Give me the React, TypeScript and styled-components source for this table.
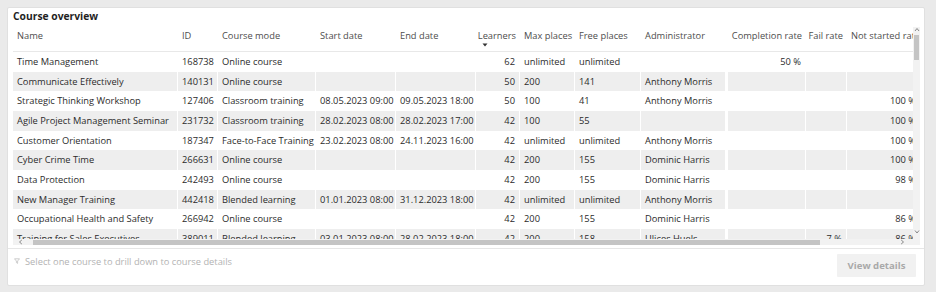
import React from "react";
import styled, { createGlobalStyle } from "styled-components";

const GlobalStyle = createGlobalStyle`
  html, body { margin: 0; padding: 0; background: #eaeaea; }
  body { font-family: "Segoe UI", "Open Sans", "Noto Sans", sans-serif; }
  * { box-sizing: border-box; }
`;

type Align = "left" | "right";
interface Col { title: string; width: number; align: Align; headAlign?: Align; sort?: boolean; sep?: number }

const COLS: Col[] = [
  { title: "Name", width: 165, align: "left" },
  { title: "ID", width: 40, align: "left" },
  { title: "Course mode", width: 98, align: "left" },
  { title: "Start date", width: 80, align: "left" },
  { title: "End date", width: 80, align: "left" },
  { title: "Learners", width: 44, align: "right", sort: true },
  { title: "Max places", width: 55, align: "left" },
  { title: "Free places", width: 66, align: "left" },
  { title: "Administrator", width: 87, align: "left", sep: 3 },
  { title: "Completion rate", width: 78, align: "right" },
  { title: "Fail rate", width: 41, align: "right" },
  { title: "Not started rate", width: 74, align: "right", headAlign: "left" },
];

const ROWS: string[][] = [
  ["Time Management", "168738", "Online course", "", "", "62", "unlimited", "unlimited", "", "50 %", "", ""],
  ["Communicate Effectively", "140131", "Online course", "", "", "50", "200", "141", "Anthony Morris", "", "", ""],
  ["Strategic Thinking Workshop", "127406", "Classroom training", "08.05.2023 09:00", "09.05.2023 18:00", "50", "100", "41", "Anthony Morris", "", "", "100 %"],
  ["Agile Project Management Seminar", "231732", "Classroom training", "28.02.2023 08:00", "28.02.2023 17:00", "42", "100", "55", "", "", "", "100 %"],
  ["Customer Orientation", "187347", "Face-to-Face Training", "23.02.2023 08:00", "24.11.2023 16:00", "42", "unlimited", "unlimited", "Anthony Morris", "", "", "100 %"],
  ["Cyber Crime Time", "266631", "Online course", "", "", "42", "200", "155", "Dominic Harris", "", "", "100 %"],
  ["Data Protection", "242493", "Online course", "", "", "42", "200", "155", "Dominic Harris", "", "", "98 %"],
  ["New Manager Training", "442418", "Blended learning", "01.01.2023 08:00", "31.12.2023 18:00", "42", "unlimited", "unlimited", "Anthony Morris", "", "", ""],
  ["Occupational Health and Safety", "266942", "Online course", "", "", "42", "200", "155", "Dominic Harris", "", "", "86 %"],
  ["Training for Sales Executives", "389011", "Blended learning", "03.01.2023 08:00", "28.02.2023 18:00", "42", "200", "158", "Ulices Huels", "", "7 %", "86 %"],
];

const gridTemplate = COLS.map((c) => `${c.width}px`).join(" ");

const Page = styled.div`
  padding: 7px 11px 6px 7px;
`;

const Card = styled.div`
  width: 918px;
  height: 279px;
  background: #ffffff;
  border: 1px solid #e0e0e0;
  border-radius: 2px;
  display: flex;
  flex-direction: column;
`;

const Title = styled.div`
  padding: 0 5px;
  height: 19px;
  line-height: 16px;
  font-size: 10.3px;
  font-weight: 700;
  color: #1f1f1f;
  white-space: nowrap;
`;

const TableFrame = styled.div`
  margin-left: 5px;
  display: grid;
  grid-template-columns: 900px 7px;
  grid-template-rows: 212px 6px;
`;

const Viewport = styled.div`
  overflow: hidden;
  position: relative;
`;

const RowGrid = styled.div<{ $stripe?: boolean; $head?: boolean }>`
  display: grid;
  grid-template-columns: ${gridTemplate};
  width: ${COLS.reduce((a, c) => a + c.width, 0)}px;
  height: ${(p) => (p.$head ? "25px" : "19.67px")};
  background: ${(p) => (p.$stripe ? "#eeeeee" : "#ffffff")};
  border-bottom: ${(p) => (p.$head ? "1px solid #e8e8e8" : "none")};
  color: ${(p) => (p.$head ? "#4d4d4d" : "#2b2b2b")};
  font-size: 9.3px;
`;

const Cell = styled.div<{ $align: Align; $sep?: number }>`
  padding: 0 4px;
  text-align: ${(p) => p.$align};
  white-space: nowrap;
  overflow: hidden;
  line-height: 19.67px;
  border-right: ${(p) => p.$sep ?? 1}px solid #ffffff;
`;

const HeadCell = styled.div<{ $align: Align }>`
  padding: 2px 4px 0 4px;
  text-align: ${(p) => p.$align};
  white-space: nowrap;
  overflow: hidden;
  line-height: 14px;
  display: flex;
  flex-direction: column;
  align-items: ${(p) => (p.$align === "right" ? "flex-end" : "flex-start")};
`;

const SortMark = styled.svg`
  display: block;
  align-self: flex-start;
  margin-left: 2px;
`;

const VTrack = styled.div`
  grid-row: 1 / span 2;
  grid-column: 2;
  background: #f2f2f2;
  display: flex;
  flex-direction: column;
  align-items: center;
`;

const VThumb = styled.div`
  width: 5px;
  height: 25px;
  margin-top: 2px;
  background: #c4c4c4;
`;

const Spacer = styled.div<{ $size?: number }>`
  flex: ${(p) => (p.$size ? `0 0 ${p.$size}px` : "1")};
`;

const HTrack = styled.div`
  grid-row: 2;
  grid-column: 1;
  background: #f2f2f2;
  display: flex;
  align-items: center;
  padding: 0 8px 0 5px;
`;

const HThumb = styled.div`
  width: 787px;
  height: 5px;
  margin-left: 9px;
  background: #c4c4c4;
`;

const Arrow = styled.svg`
  display: block;
  flex: none;
`;

const Footer = styled.div`
  margin-top: 3px;
  border-top: 1px solid #e6e6e6;
  display: flex;
  align-items: flex-start;
  justify-content: space-between;
  padding: 5px 8px 0 6px;
  flex: 1;
`;

const Hint = styled.div`
  display: flex;
  align-items: center;
  gap: 5px;
  height: 14px;
  font-size: 9.3px;
  color: #b3b3b3;
  white-space: nowrap;
`;

const Button = styled.button`
  width: 79px;
  height: 23px;
  border: none;
  border-radius: 1px;
  background: #f1f1f1;
  color: #a9a9a9;
  font-family: inherit;
  font-size: 9.6px;
  font-weight: 700;
  padding: 0;
  cursor: default;
`;

const Chevron = ({ dir }: { dir: "up" | "down" | "left" | "right" }) => {
  const d = {
    up: "M1 4 L3 1.5 L5 4",
    down: "M1 1.5 L3 4 L5 1.5",
    left: "M3.8 1 L1.5 3 L3.8 5",
    right: "M2.2 1 L4.5 3 L2.2 5",
  }[dir];
  return (
    <Arrow width="6" height="6" viewBox="0 0 6 6">
      <path d={d} fill="none" stroke="#7a7a7a" strokeWidth="0.9" />
    </Arrow>
  );
};

export default function App() {
  return (
    <>
      <GlobalStyle />
      <Page>
        <Card>
          <Title>Course overview</Title>
          <TableFrame>
            <Viewport>
              <RowGrid $head>
                {COLS.map((c) => (
                  <HeadCell key={c.title} $align={c.headAlign ?? c.align}>
                    <span>{c.title}</span>
                    {c.sort && (
                      <SortMark width="6" height="4" viewBox="0 0 6 4">
                        <path d="M0.5 0.5 H5.5 L3 3.5 Z" fill="#333" />
                      </SortMark>
                    )}
                  </HeadCell>
                ))}
              </RowGrid>
              {ROWS.map((r, i) => (
                <RowGrid key={i} $stripe={i % 2 === 1}>
                  {r.map((v, j) => (
                    <Cell key={j} $align={COLS[j].align} $sep={COLS[j].sep}>
                      {v}
                    </Cell>
                  ))}
                </RowGrid>
              ))}
            </Viewport>
            <VTrack>
              <Chevron dir="up" />
              <VThumb />
              <Spacer />
              <Chevron dir="down" />
              <Spacer $size={10} />
            </VTrack>
            <HTrack>
              <Chevron dir="left" />
              <HThumb />
              <Spacer />
              <Chevron dir="right" />
            </HTrack>
          </TableFrame>
          <Footer>
            <Hint>
              <svg width="6" height="6" viewBox="0 0 6 6">
                <path d="M0.5 0.8 H5.5 L3.6 3 V5.4 L2.4 4.6 V3 Z" fill="none" stroke="#b8b8b8" strokeWidth="0.7" />
              </svg>
              Select one course to drill down to course details
            </Hint>
            <Button>View details</Button>
          </Footer>
        </Card>
      </Page>
    </>
  );
}
